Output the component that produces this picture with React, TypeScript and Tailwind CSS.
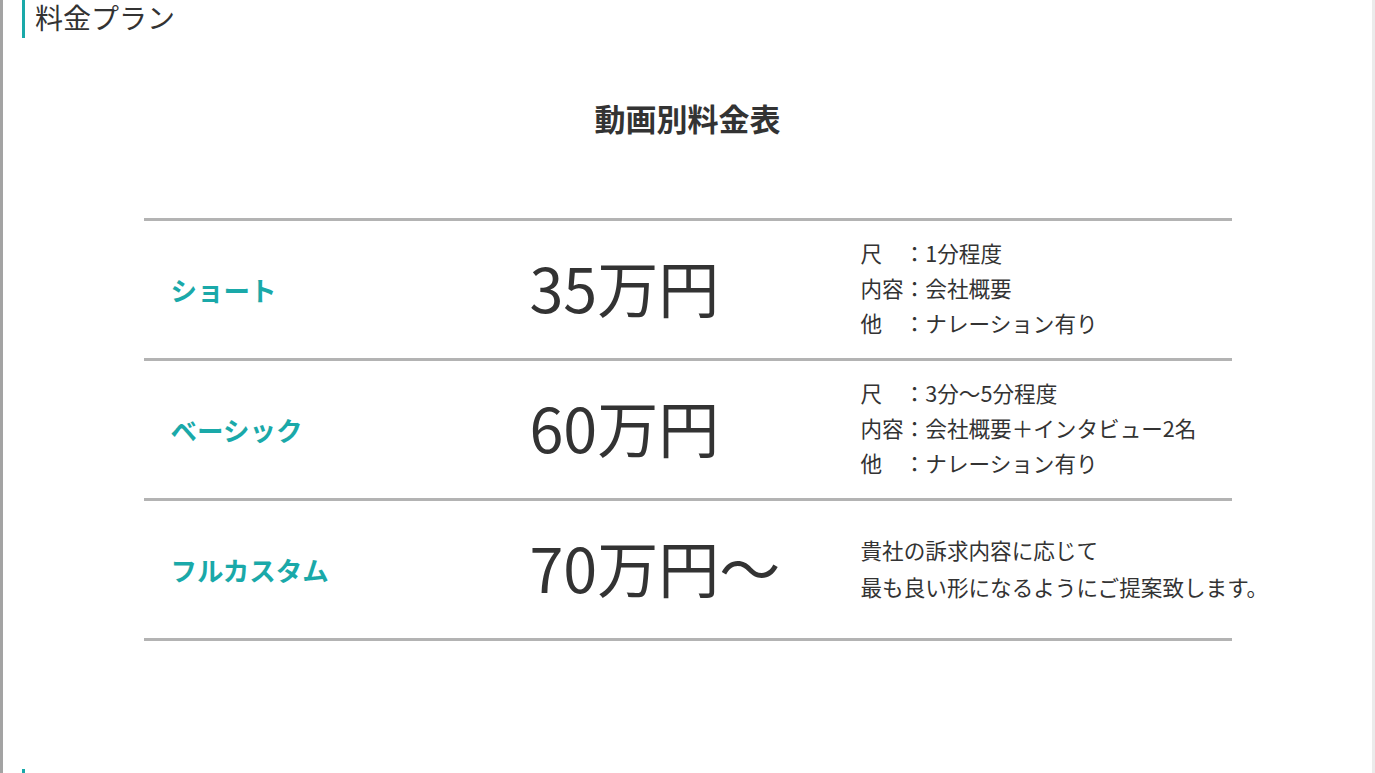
const plans = [
  {
    name: 'ショート',
    price: '35万円',
    lines: ['尺\u3000：1分程度', '内容：会社概要', '他\u3000：ナレーション有り'],
  },
  {
    name: 'ベーシック',
    price: '60万円',
    lines: ['尺\u3000：3分〜5分程度', '内容：会社概要＋インタビュー2名', '他\u3000：ナレーション有り'],
  },
  {
    name: 'フルカスタム',
    price: '70万円〜',
    lines: ['貴社の訴求内容に応じて', '最も良い形になるようにご提案致します。'],
  },
];

export default function App() {
  return (
    <div
      className="min-h-[773px] bg-white border-l-[3px] border-[#a3a3a3] border-r-[3px] border-r-[#ebebeb] text-[#333]"
      style={{ fontFamily: '"Noto Sans CJK JP", "Noto Sans", sans-serif' }}
    >
      {/* Section title */}
      <div className="ml-[19px] h-[38px] border-l-[3px] border-[#1aa9a9] pl-[10px] text-[28px] leading-[34px]">
        料金プラン
      </div>

      <h2 className="mt-[57px] text-center text-[31px] font-bold leading-[45px]">動画別料金表</h2>

      {/* Price table */}
      <div className="mx-auto mt-[78px] w-[1088px] border-b-[3px] border-[#b3b3b3]">
        {plans.map((plan) => (
          <div
            key={plan.name}
            className="grid grid-cols-[386px_331px_1fr] items-center h-[140px] border-t-[3px] border-[#b3b3b3]"
          >
            <div className="pl-[27px] text-[26.5px] font-bold text-[#1aa9a9]">{plan.name}</div>
            <div className="text-[61px] leading-none pb-[6px] whitespace-nowrap">{plan.price}</div>
            <div
              className={`text-[21.6px] whitespace-nowrap pb-[4px] ${plan.lines.length === 2 ? 'leading-[37px]' : 'leading-[35px]'}`}
            >
              {plan.lines.map((l) => (
                <div key={l}>{l}</div>
              ))}
            </div>
          </div>
        ))}
      </div>

      {/* Next section title start */}
      <div className="ml-[19px] mt-[128px] h-[10px] border-l-[3px] border-[#1aa9a9]" />
    </div>
  );
}
